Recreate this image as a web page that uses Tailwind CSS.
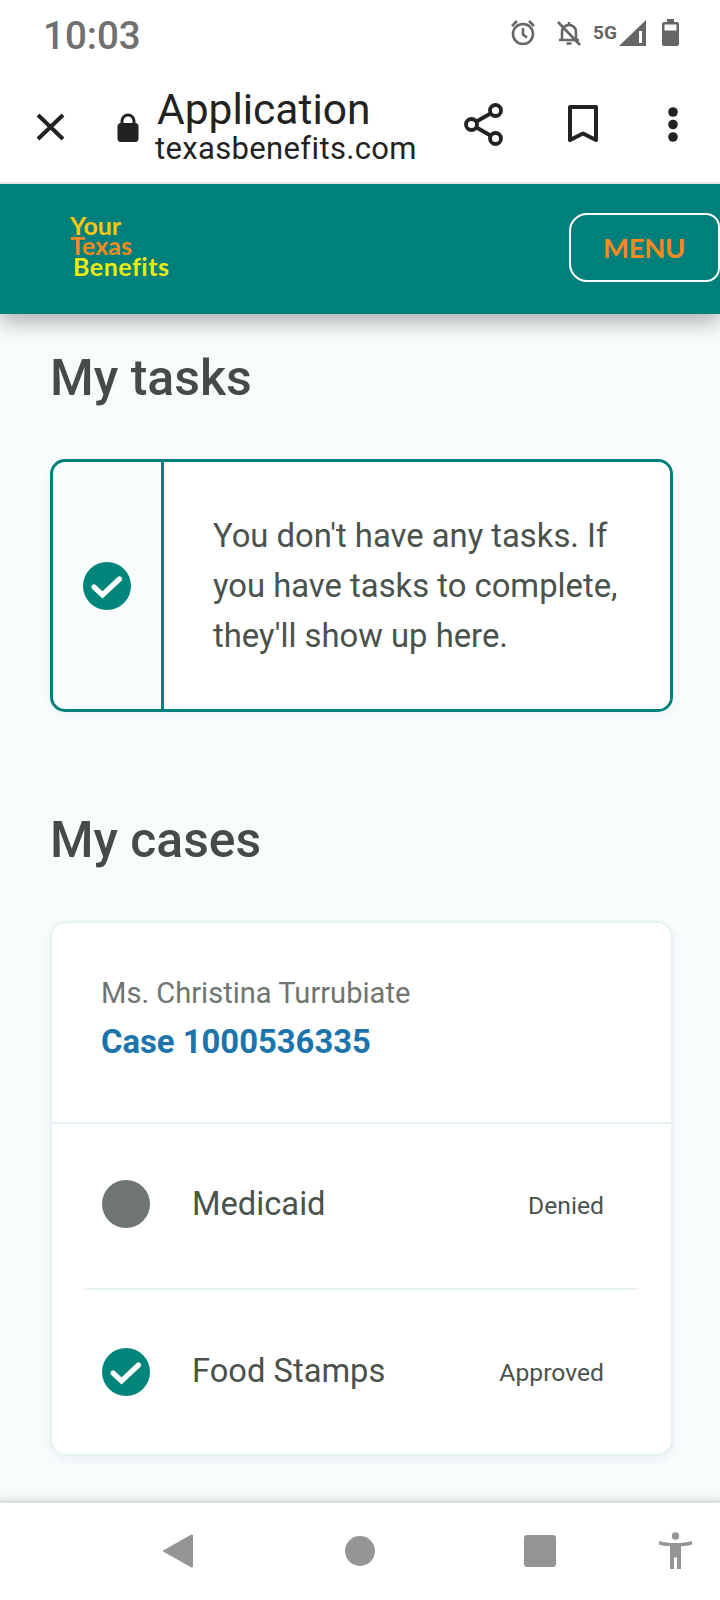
<!DOCTYPE html>
<html>
<head>
<meta charset="utf-8">
<script src="https://cdn.jsdelivr.net/npm/@tailwindcss/browser@4"></script>
</head>
<body class="m-0">
<div class="w-[720px] h-[1600px] flex flex-col overflow-hidden bg-white font-['Roboto',sans-serif]">

  <!-- status bar -->
  <div class="h-[72px] shrink-0 flex items-center justify-between pl-[43px] pr-[40px] bg-white">
    <span class="text-[38.500px] leading-[72px] font-medium text-[#707070]">10:03</span>
    <div class="flex items-center h-[72px] relative w-[170px]">
      <svg class="absolute left-[0px] top-[19px]" width="26" height="27" viewBox="0 0 26 27" fill="none" stroke="#666" stroke-width="2.6"><circle cx="13" cy="15" r="10"/><path d="M13 9v6.5l4 3"/><path d="M2 7l5-5M24 7l-5-5"/></svg>
      <svg class="absolute left-[46px] top-[20px]" width="26" height="27" viewBox="0 0 26 27" fill="none" stroke="#666" stroke-width="2.6"><path d="M6 19V12c0-4 3-7 7-7s7 3 7 7v7M3 20h20"/><path d="M13 2v3M10.500 23.500h5"/><path d="M2 2l22 23"/></svg>
      <span class="absolute left-[83px] top-[23px] text-[19px] leading-[19px] font-bold text-[#666]">5G</span>
      <svg class="absolute left-[109px] top-[20px]" width="27" height="26" viewBox="0 0 27 26"><path d="M27 0V26H0Z" fill="#666"/><rect x="20" y="11" width="3" height="12" fill="#fff"/></svg>
      <svg class="absolute left-[152px] top-[19px]" width="17" height="27" viewBox="0 0 17 27"><path d="M5 0h7v3h3a2 2 0 0 1 2 2v20a2 2 0 0 1-2 2H2a2 2 0 0 1-2-2V5a2 2 0 0 1 2-2h3z" fill="#666"/><rect x="2.500" y="5.500" width="12" height="6" fill="#fff"/></svg>
    </div>
  </div>

  <!-- browser toolbar -->
  <div class="h-[112px] shrink-0 relative flex items-center bg-white border-b-[2px] border-[#dfe3e2]">
    <svg class="ml-[36px] shrink-0" width="29" height="28" viewBox="0 0 29 28" fill="none" stroke="#222" stroke-width="4"><path d="M2 2l25 24M27 2L2 26"/></svg>
    <svg class="ml-[52px] shrink-0" width="22" height="29" viewBox="0 0 22 29"><path d="M5 11V8a6 6 0 0 1 12 0v3" fill="none" stroke="#222" stroke-width="3"/><rect x="0.500" y="10" width="21" height="19" rx="3.500" fill="#222"/></svg>
    <div class="ml-[16px] flex flex-col w-[290px]">
      <span class="text-[42.500px] leading-[44px] text-[#222] -mt-[1px] ml-[2px]">Application</span>
      <span class="text-[31px] leading-[34px] text-[#222] tracking-[0.35px]">texasbenefits.com</span>
    </div>
    <svg class="absolute left-[464px] top-[31px]" width="39" height="43" viewBox="0 0 39 43" fill="none" stroke="#222" stroke-width="3.800"><circle cx="31.500" cy="7.500" r="5.500"/><circle cx="7.500" cy="21.500" r="5.500"/><circle cx="31.500" cy="35.500" r="5.500"/><path d="M12.500 18.500L26.500 10.500M12.500 24.500L26.500 32.500"/></svg>
    <svg class="absolute left-[568px] top-[33px]" width="30" height="38" viewBox="0 0 30 38" fill="none" stroke="#222" stroke-width="4"><path d="M2 2h26v33l-13-6.500L2 35z" stroke-linejoin="round"/></svg>
    <svg class="absolute left-[668px] top-[35px]" width="10" height="35" viewBox="0 0 10 35" fill="#222"><circle cx="5" cy="5" r="4.800"/><circle cx="5" cy="17.500" r="4.800"/><circle cx="5" cy="30" r="4.800"/></svg>
  </div>

  <!-- page -->
  <div class="relative flex-1 min-h-0 bg-[#f8fcfd] overflow-hidden">
    <header class="relative z-10 h-[130px] bg-[#00807a] flex items-center justify-between shadow-[0_8px_20px_rgba(0,0,0,0.3)]">
      <div class="ml-[70px] -mt-[7px] flex flex-col font-['Lato',sans-serif] font-bold text-[25px] leading-[20px]">
        <span class="text-[#fdc60f]">Your</span>
        <span class="text-[#f58a1f]">Texas</span>
        <span class="text-[#eeea10] ml-[3px] mt-[1px] tracking-[0.5px]">Benefits</span>
      </div>
      <div class="w-[151px] h-[69px] -mt-[3px] border-[2px] border-white rounded-l-[18px] rounded-r-[14px] pl-[32px] flex items-center font-['Lato',sans-serif] font-bold text-[#f7891e] text-[27.500px] tracking-[-0.3px]">MENU</div>
    </header>

    <main class="pl-[50px] pr-[47px] pb-[44px] text-[#4a524d]">
      <h1 class="mt-[35px] text-[50px] leading-[58px] font-medium text-[#454c47]">My tasks</h1>
      <section class="mt-[52px] h-[253px] flex border-[3px] border-[#00807a] rounded-[15px] overflow-hidden shadow-[0_3px_8px_rgba(30,80,80,0.06)]">
        <div class="w-[111px] shrink-0 flex items-center justify-center border-r-[3px] border-[#00807a] pr-[1px]">
          <svg width="48" height="48" viewBox="0 0 48 48"><circle cx="24" cy="24" r="24" fill="#00857b"/><path d="M11 25l8.500 8L36.500 17" fill="none" stroke="#fff" stroke-width="5.200" stroke-linecap="round"/></svg>
        </div>
        <div class="flex-1 bg-white flex items-center pl-[49px] pr-[20px] text-[32.800px] leading-[50px] text-[#4a524d]">
          <p>You don't have any tasks. If you have tasks to complete, they'll show up here.</p>
        </div>
      </section>

      <h1 class="mt-[99px] text-[49.800px] leading-[58px] font-medium text-[#454c47]">My cases</h1>
      <section class="mt-[52px] h-[535px] bg-white border-[2px] border-[#e8f1f2] rounded-[16px] shadow-[0_3px_10px_rgba(30,80,80,0.07)] flex flex-col">
        <div class="h-[201px] shrink-0 pl-[49px] pt-[50px] border-b-[2px] border-[#e8f1f2]">
          <p class="text-[29.100px] leading-[40px] text-[#6f7572]">Ms. Christina Turrubiate</p>
          <p class="mt-[8px] text-[32.800px] leading-[42px] font-bold text-[#1b75ac]">Case 1000536335</p>
        </div>
        <div class="ml-[33px] mr-[34px] h-[166px] shrink-0 flex items-center pl-[17px] pr-[33px] pb-[4px] border-b-[2px] border-[#e8f1f2]">
          <div class="w-[48px] h-[48px] shrink-0 rounded-full bg-[#6f7572]"></div>
          <span class="ml-[42px] flex-1 text-[32.700px] text-[#4a524d] pt-[1px]">Medicaid</span>
          <span class="text-[24.700px] text-[#4a524d] pt-[3px]">Denied</span>
        </div>
        <div class="ml-[33px] mr-[34px] flex-1 flex items-center pl-[17px] pr-[33px]">
          <svg class="shrink-0" width="48" height="48" viewBox="0 0 48 48"><circle cx="24" cy="24" r="24" fill="#00857b"/><path d="M11 25l8.500 8L36.500 17" fill="none" stroke="#fff" stroke-width="5.200" stroke-linecap="round"/></svg>
          <span class="ml-[42px] flex-1 text-[32.700px] text-[#4a524d]">Food Stamps</span>
          <span class="text-[24.700px] text-[#4a524d] pt-[2px]">Approved</span>
        </div>
      </section>
    </main>
  </div>

  <!-- android nav -->
  <div class="h-[100px] shrink-0 relative bg-white border-t-[3px] border-[#dde1e1] shadow-[0_-3px_5px_rgba(0,0,0,0.08)]">
    <svg class="absolute left-[163px] top-[31px]" width="30" height="34" viewBox="0 0 30 34"><path d="M27.500 1L1 16a1 1 0 0 0 0 2l26.500 15a1.500 1.500 0 0 0 2.500-1.500V2.500A1.500 1.500 0 0 0 27.500 1z" fill="#959595"/></svg>
    <div class="absolute left-[345px] top-[33px] w-[30px] h-[30px] rounded-full bg-[#959595]"></div>
    <div class="absolute left-[524px] top-[32px] w-[32px] h-[32px] rounded-[3px] bg-[#959595]"></div>
    <svg class="absolute left-[659px] top-[29px]" width="33" height="37" viewBox="0 0 33 37" fill="#959595"><circle cx="16.500" cy="4" r="3.700"/><path d="M0 9c5 1.500 10 2 16.500 2S28 10.500 33 9v3.500c-3 1-7 1.500-11 1.800V37h-4V25.500h-3V37h-4V14.300c-4-.3-8-.8-11-1.800z"/></svg>
  </div>
</div>
</body>
</html>
